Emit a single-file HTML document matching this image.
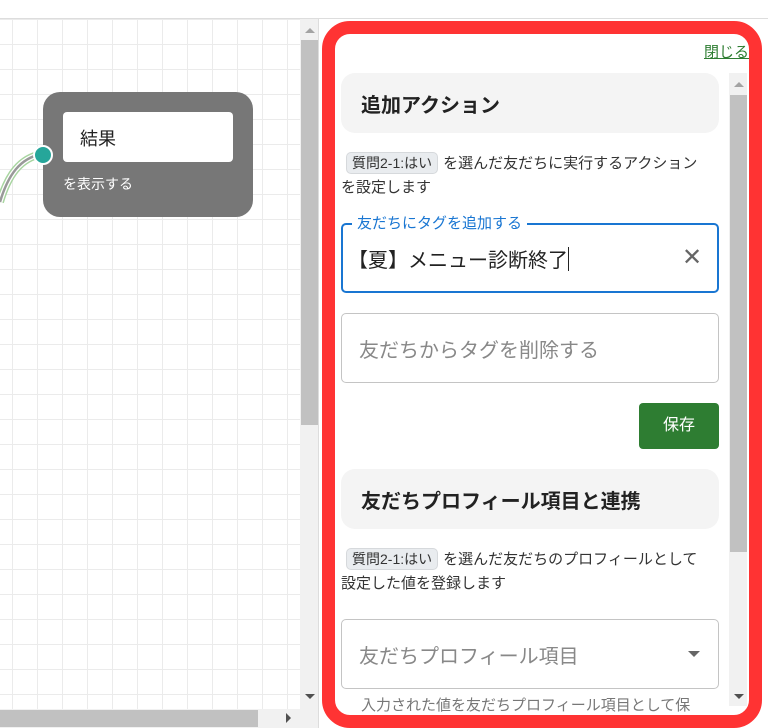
<!DOCTYPE html>
<html><head><meta charset="utf-8"><style>
*{box-sizing:border-box;margin:0;padding:0}
html,body{width:768px;height:728px;overflow:hidden}
body{background:#fff;font-family:"Liberation Sans","Noto Sans CJK JP",sans-serif;position:relative}
.a{position:absolute}
.grid{left:0;top:19px;width:300px;height:690px;background-color:#fff;
background-image:linear-gradient(#ebebeb 1px,transparent 1px),linear-gradient(90deg,#ebebeb 1px,transparent 1px);
background-size:25px 25px;background-position:12px 0px}
.hdr{border-radius:14px;background:#f4f4f4;font-weight:bold;font-size:20px;color:#222;padding-left:20px;display:flex;align-items:center}
.chip{display:inline-block;background:#e9ecef;border:1px solid #d6d9dc;border-radius:5px;font-size:14px;line-height:20px;padding:0 5px;color:#333;margin:0 5px 0 5px}
.txt{font-size:15px;color:#333;line-height:24px;white-space:nowrap}
</style></head><body>
<div class="a" style="left:0;top:18px;width:768px;height:1px;background:#ddd"></div>
<div class="a grid"></div>
<svg class="a" style="left:0;top:140px" width="50" height="80"><path d="M0 62 C8 35 20 18 42 14" stroke="#a8d5a0" stroke-width="8" fill="none"/><path d="M0 62 C8 35 20 18 42 14" stroke="#fff" stroke-width="5" fill="none"/><path d="M0 62 C8 35 20 18 42 14" stroke="#999" stroke-width="2.5" fill="none"/></svg>
<div class="a" style="left:43px;top:92px;width:210px;height:125px;background:#777;border-radius:17px"></div>
<div class="a" style="left:63px;top:112px;width:170px;height:50px;background:#fff;border-radius:4px;font-size:18px;padding:13px 0 0 17px;color:#222">結果</div>
<div class="a" style="left:63px;top:174px;font-size:14px;color:#fff">を表示する</div>
<div class="a" style="left:33px;top:145px;width:20px;height:20px;border-radius:50%;background:#26a69a;border:2px solid #fff"></div>
<div class="a" style="left:300px;top:19px;width:18px;height:690px;background:#f1f1f1"></div>
<div class="a" style="left:301px;top:40px;width:17px;height:385px;background:#c1c1c1"></div>
<div class="a" style="left:305px;top:28px;border:5px solid transparent;border-bottom:5px solid #a3a3a3;border-top:0"></div>
<div class="a" style="left:305px;top:694px;border:5px solid transparent;border-top:5px solid #505050;border-bottom:0"></div>
<div class="a" style="left:0;top:709px;width:318px;height:19px;background:#f1f1f1"></div>
<div class="a" style="left:0;top:710px;width:258px;height:17px;background:#c1c1c1"></div>
<div class="a" style="left:286px;top:713px;border:5px solid transparent;border-left:5px solid #505050;border-right:0"></div>
<div class="a" style="left:318px;top:19px;width:450px;height:709px;background:#fff;border-left:1px solid #ddd"></div>
<div class="a" style="left:322px;top:21px;width:440px;height:707px;border:13px solid #ff3333;border-radius:28px;background:#fff"></div>
<div class="a" style="left:704px;top:41px;font-size:15px;color:#2e7d32;text-decoration:underline">閉じる</div>
<div class="a" style="left:729px;top:73px;width:18px;height:633px;background:#f1f1f1"></div>
<div class="a" style="left:730px;top:95px;width:17px;height:457px;background:#c1c1c1"></div>
<div class="a" style="left:734px;top:82px;border:5px solid transparent;border-bottom:5px solid #a3a3a3;border-top:0"></div>
<div class="a" style="left:734px;top:694px;border:5px solid transparent;border-top:5px solid #505050;border-bottom:0"></div>

<div class="a hdr" style="left:341px;top:73px;width:378px;height:60px">追加アクション</div>
<div class="a txt" style="left:341px;top:152px;width:385px"><span class="chip">質問2-1:はい</span>を選んだ友だちに実行するアクション<br>を設定します</div>
<div class="a" style="left:341px;top:223px;width:378px;height:70px;border:2px solid #1976d2;border-radius:5px"></div>
<div class="a" style="left:352px;top:212px;background:#fff;padding:0 5px;font-size:15px;color:#1976d2">友だちにタグを追加する</div>
<div class="a" style="left:348px;top:244px;font-size:20px;color:#222;white-space:nowrap">【夏】メニュー診断終了<span style="display:inline-block;width:1px;height:24px;background:#222;vertical-align:-4px"></span></div>
<div class="a" style="left:682px;top:246px;font-size:24px;color:#666;line-height:24px">✕</div>
<div class="a" style="left:341px;top:313px;width:378px;height:70px;border:1px solid #c4c4c4;border-radius:5px;font-size:20px;color:#888;padding:20px 0 0 17px">友だちからタグを削除する</div>
<div class="a" style="left:639px;top:403px;width:80px;height:46px;background:#2e7d32;border-radius:4px;color:#fff;font-size:16px;text-align:center;line-height:46px">保存</div>
<div class="a hdr" style="left:341px;top:469px;width:378px;height:60px">友だちプロフィール項目と連携</div>
<div class="a txt" style="left:341px;top:548px;width:385px"><span class="chip">質問2-1:はい</span>を選んだ友だちのプロフィールとして<br>設定した値を登録します</div>
<div class="a" style="left:341px;top:619px;width:378px;height:70px;border:1px solid #c4c4c4;border-radius:5px;font-size:20px;color:#888;padding:20px 0 0 17px">友だちプロフィール項目</div>
<div class="a" style="left:688px;top:651px;border:6px solid transparent;border-top:6px solid #666;border-bottom:0"></div>
<div class="a" style="left:361px;top:694px;font-size:15px;color:#777;width:360px;height:20px;overflow:hidden;white-space:nowrap">入力された値を友だちプロフィール項目として保</div>
</body></html>
